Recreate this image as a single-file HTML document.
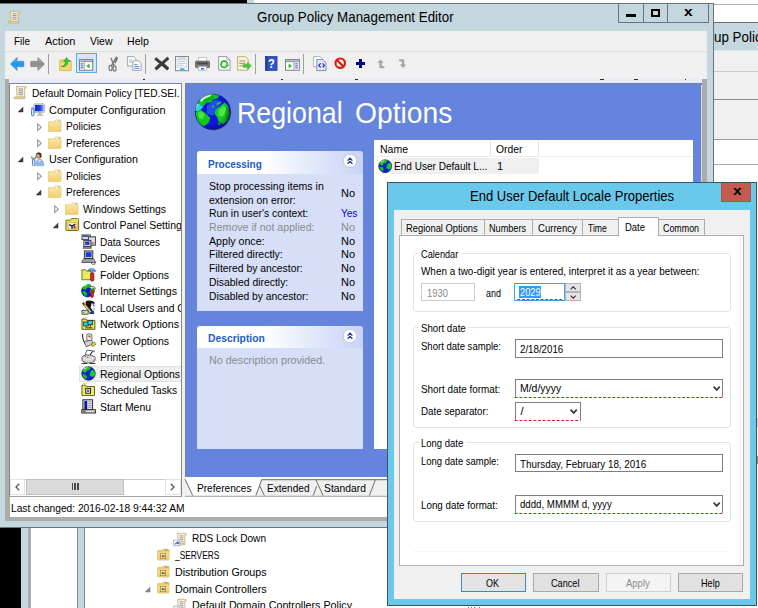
<!DOCTYPE html>
<html><head><meta charset="utf-8"><title>Group Policy Management Editor</title>
<style>
html,body{margin:0;padding:0;background:#fff;}
body{width:758px;height:608px;overflow:hidden;position:relative;font-family:"Liberation Sans",sans-serif;}
.r{position:absolute;box-sizing:border-box;}
.t{position:absolute;white-space:nowrap;font-family:"Liberation Sans",sans-serif;}
svg{overflow:visible;}
</style></head><body>
<svg class="r" style="left:0;top:0" width="0" height="0"><defs><linearGradient id="fg" x1="0" y1="0" x2="0" y2="1"><stop offset="0" stop-color="#fbe9a8"/><stop offset="1" stop-color="#f1ce70"/></linearGradient></defs></svg>
<div class="r" style="left:0.00px;top:0.00px;width:247.00px;height:3.20px;background:#000;"></div>
<div class="r" style="left:247.00px;top:0.00px;width:7.00px;height:3.20px;background:#c4d7de;"></div>
<div class="r" style="left:713.00px;top:0.00px;width:45.00px;height:608.00px;background:#fff;"></div>
<div class="r" style="left:713.00px;top:3.60px;width:45.00px;height:1.00px;background:#b5b5b5;"></div>
<div class="r" style="left:713.00px;top:22.00px;width:45.00px;height:1.00px;background:#6f6f6f;"></div>
<div class="r" style="left:713.00px;top:23.00px;width:45.00px;height:27.50px;background:#c4d7de;"></div>
<div class="r" style="left:713.00px;top:50.50px;width:45.00px;height:89.00px;background:#f0f0f0;"></div>
<div class="r" style="left:713.00px;top:50.30px;width:45.00px;height:1.00px;background:#dfe6ea;"></div>
<div class="r" style="left:713.00px;top:70.80px;width:45.00px;height:1.00px;background:#c9c9c9;"></div>
<div class="r" style="left:713.00px;top:98.60px;width:45.00px;height:1.60px;background:#8c8c8c;"></div>
<div class="r" style="left:713.00px;top:138.80px;width:45.00px;height:1.00px;background:#9a9a9a;"></div>
<div class="r" style="left:713.00px;top:163.80px;width:45.00px;height:1.00px;background:#a8a8a8;"></div>
<div class="t" style="left:713.60px;top:26.91px;height:20px;line-height:20px;font-size:15.4px;color:#000;transform:scaleX(0.8688);transform-origin:0 50%;">up Polic</div>
<div class="r" style="left:0.00px;top:528.00px;width:21.00px;height:80.00px;background:#000;"></div>
<div class="r" style="left:20.60px;top:528.00px;width:8.00px;height:80.00px;background:#c4d7de;"></div>
<div class="r" style="left:28.20px;top:528.00px;width:3.30px;height:80.00px;background:#ababab;"></div>
<div class="r" style="left:77.00px;top:528.00px;width:7.80px;height:80.00px;background:#c4d7de;border-left:1px solid #7f8a90;border-right:1px solid #7f8a90;"></div>
<div class="r" style="left:0.00px;top:3.00px;width:713.90px;height:525.20px;background:#c4d7de;border-top:1px solid #66747b;border-right:1px solid #66747b;border-bottom:1px solid #66747b;"></div>
<div class="t" style="left:257.30px;top:8.18px;height:18px;line-height:18px;font-size:14px;color:#000;transform:scaleX(0.9534);transform-origin:0 50%;">Group Policy Management Editor</div>
<div class="r" style="left:618.20px;top:3.00px;width:90.80px;height:19.80px;border:1px solid #66747b;"></div>
<div class="r" style="left:643.20px;top:4.00px;width:1.00px;height:18.00px;background:#66747b;"></div>
<div class="r" style="left:667.20px;top:4.00px;width:1.00px;height:18.00px;background:#66747b;"></div>
<div class="r" style="left:626.20px;top:14.20px;width:9.40px;height:2.60px;background:#000;"></div>
<div class="r" style="left:651.20px;top:9.40px;width:9.00px;height:7.20px;border:2px solid #000;border-top-width:2.4px;"></div>
<div class="t" style="left:683.60px;top:3.47px;height:18px;line-height:18px;font-size:13.5px;color:#000;font-weight:700;transform:scaleX(1.15);transform-origin:left center;">x</div>
<div class="r" style="left:5.00px;top:30.50px;width:702.00px;height:21.00px;background:#f0f0f0;"></div>
<div class="r" style="left:5.00px;top:51.20px;width:702.00px;height:1.00px;background:#dcdcdc;"></div>
<div class="r" style="left:5.00px;top:52.20px;width:702.00px;height:27.00px;background:#f0f0f0;"></div>
<div class="r" style="left:5.00px;top:79.20px;width:702.00px;height:442.00px;background:#ababab;"></div>
<div class="t" style="left:14.40px;top:33.73px;height:15px;line-height:15px;font-size:11.5px;color:#000;transform:scaleX(0.8634);transform-origin:0 50%;">File</div>
<div class="t" style="left:45.00px;top:33.73px;height:15px;line-height:15px;font-size:11.5px;color:#000;transform:scaleX(0.9511);transform-origin:0 50%;">Action</div>
<div class="t" style="left:90.00px;top:33.73px;height:15px;line-height:15px;font-size:11.5px;color:#000;transform:scaleX(0.9102);transform-origin:0 50%;">View</div>
<div class="t" style="left:127.00px;top:33.73px;height:15px;line-height:15px;font-size:11.5px;color:#000;transform:scaleX(0.9217);transform-origin:0 50%;">Help</div>
<div class="r" style="left:47.80px;top:54.00px;width:1.00px;height:19.50px;background:#a0a0a0;"></div>
<div class="r" style="left:145.00px;top:54.00px;width:1.00px;height:19.50px;background:#a0a0a0;"></div>
<div class="r" style="left:254.50px;top:54.00px;width:1.00px;height:19.50px;background:#a0a0a0;"></div>
<div class="r" style="left:303.20px;top:54.00px;width:1.00px;height:19.50px;background:#a0a0a0;"></div>
<div class="r" style="left:76.00px;top:53.30px;width:20.80px;height:20.20px;background:#cfe6fa;border:1px solid #5ea8e8;"></div>
<div class="r" style="left:9.00px;top:79.20px;width:693.00px;height:4.00px;background:#e6eafb;"></div>
<div class="r" style="left:143.40px;top:78.90px;width:2.00px;height:1.00px;background:#2a2a2a;"></div>
<div class="r" style="left:280.60px;top:78.90px;width:2.60px;height:1.00px;background:#2a2a2a;"></div>
<div class="r" style="left:354.60px;top:78.90px;width:3.20px;height:1.00px;background:#2a2a2a;"></div>
<div class="r" style="left:600.00px;top:78.90px;width:4.30px;height:1.00px;background:#2a2a2a;"></div>
<div class="r" style="left:633.80px;top:78.90px;width:4.60px;height:1.00px;background:#2a2a2a;"></div>
<div class="r" style="left:685.00px;top:78.90px;width:1.20px;height:1.00px;background:#2a2a2a;"></div>
<div class="r" style="left:143.60px;top:46.00px;width:1.60px;height:1.20px;background:#5a3a7a;"></div>
<div class="r" style="left:9.00px;top:83.00px;width:173.00px;height:414.00px;background:#fff;border:1px solid #828790;border-bottom:1.6px solid #a0a0a0;"></div>
<div class="r" style="left:182.00px;top:83.00px;width:3.20px;height:414.00px;background:#f0f0f0;"></div>
<div class="r" style="left:185.00px;top:83.00px;width:517.00px;height:394.00px;background:#6484de;border:1.6px solid #7b8087;border-bottom:none;border-right:none;"></div>
<div class="r" style="left:701.40px;top:84.60px;width:1.10px;height:392.40px;background:#dadada;"></div>
<div class="r" style="left:10.00px;top:497.00px;width:697.00px;height:19.80px;background:#fff;"></div>
<div class="t" style="left:10.60px;top:500.93px;height:15px;line-height:15px;font-size:11.5px;color:#000;transform:scaleX(0.8873);transform-origin:0 50%;">Last changed: 2016-02-18 9:44:32 AM</div>
<div class="r" style="left:0;top:0;width:181.3px;height:497px;overflow:hidden">
<div class="t" style="left:31.90px;top:86.42px;height:14px;line-height:14px;font-size:11px;color:#000;transform:scaleX(0.9215);transform-origin:0 50%;">Default Domain Policy [TED.SEI.</div>
<svg class="r" style="left:12.60px;top:85.00px;" width="15" height="15" viewBox="0 0 16 16"><path d="M3.5 1.5h9.5c1.2 0 1.6 1 1 2h-1.5v9.5H4.5z" fill="#f7edc4" stroke="#b9a774" stroke-width=".8"/><path d="M1.2 12.8h10.6c.9 0 1 .9.6 1.9H2.2c-1 0-1.5-1-1-1.9z" fill="#efe0a6" stroke="#b9a774" stroke-width=".8"/><path d="M12.4 1.6c1.4-.2 2.2.8 1.6 1.9h-1.6z" fill="#d9c78c"/><path d="M6 4.2h4.6M6 6.2h4.6M6 8.2h4.6M6 10.2h4.6" stroke="#8a86c4" stroke-width="1"/></svg>
<div class="t" style="left:48.90px;top:102.92px;height:14px;line-height:14px;font-size:11px;color:#000;transform:scaleX(0.9975);transform-origin:0 50%;">Computer Configuration</div>
<svg class="r" style="left:29.60px;top:101.50px;" width="15" height="15" viewBox="0 0 16 16"><rect x="4.2" y="1.9" width="11.4" height="9.2" rx=".8" fill="#dfe2e6" stroke="#a4a9b0" stroke-width=".8"/><defs><linearGradient id="sg" x1="0" y1="0" x2="1" y2="0"><stop offset="0" stop-color="#0a24d4"/><stop offset=".55" stop-color="#1c3ee0"/><stop offset="1" stop-color="#7a98f4"/></linearGradient></defs><rect x="5.4" y="3.1" width="9" height="6.8" fill="url(#sg)"/><path d="M9.2 11.1h2.6l.6 2.2h2v1.4H7.4v-1.4h1.4z" fill="#b6bac0"/><rect x="1.7" y="7.6" width="2.5" height="7.3" rx="1.2" fill="#eef4fc" stroke="#2f6fd0" stroke-width="1"/><path d="M1.2 7.8c0-1.4.6-2.2 1.800-2.200s1.800.8 1.800 2.200z" fill="#b4bcc6" stroke="#7a828c" stroke-width=".6"/></svg>
<svg class="r" style="left:18.40px;top:107.40px;" width="5.4" height="5.4" viewBox="0 0 5.4 5.4"><path d="M5 .2V5H.2z" fill="#404040" stroke="#262626" stroke-width=".5"/></svg>
<div class="t" style="left:65.90px;top:119.42px;height:14px;line-height:14px;font-size:11px;color:#000;transform:scaleX(0.9234);transform-origin:0 50%;">Policies</div>
<svg class="r" style="left:47.50px;top:118.00px;" width="15" height="15" viewBox="0 0 16 16"><path d="M.4 4h6.3l1.2-1.900h5.300q.7 0 .7.7V13.8q0 .6-.6.6H1q-.6 0-.6-.6z" fill="url(#fg)" stroke="#e2c46a" stroke-width=".7"/><rect x="8.7" y="2.7" width="4" height="1.5" fill="#fdf7e0"/><rect x="10.7" y="2.8" width="1.5" height="1.1" fill="#4a8ae0"/></svg>
<svg class="r" style="left:36.90px;top:122.90px;" width="5" height="8.4" viewBox="0 0 5 8.4"><path d="M.7 .9L4.3 4.2.7 7.5z" fill="#fff" stroke="#9c9c9c" stroke-width="1.15"/></svg>
<div class="t" style="left:65.90px;top:135.92px;height:14px;line-height:14px;font-size:11px;color:#000;transform:scaleX(0.9105);transform-origin:0 50%;">Preferences</div>
<svg class="r" style="left:47.50px;top:134.50px;" width="15" height="15" viewBox="0 0 16 16"><path d="M.4 4h6.3l1.2-1.900h5.300q.7 0 .7.7V13.8q0 .6-.6.6H1q-.6 0-.6-.6z" fill="url(#fg)" stroke="#e2c46a" stroke-width=".7"/><rect x="8.7" y="2.7" width="4" height="1.5" fill="#fdf7e0"/><rect x="10.7" y="2.8" width="1.5" height="1.1" fill="#4a8ae0"/></svg>
<svg class="r" style="left:36.90px;top:139.40px;" width="5" height="8.4" viewBox="0 0 5 8.4"><path d="M.7 .9L4.3 4.2.7 7.5z" fill="#fff" stroke="#9c9c9c" stroke-width="1.15"/></svg>
<div class="t" style="left:48.90px;top:152.42px;height:14px;line-height:14px;font-size:11px;color:#000;transform:scaleX(0.9704);transform-origin:0 50%;">User Configuration</div>
<svg class="r" style="left:29.60px;top:151.00px;" width="15" height="15" viewBox="0 0 16 16"><path d="M6.1 15.8c0-4.600 1.600-7.300 4.300-7.300s4.300 2.700 4.300 7.300z" fill="#8fb9ea" stroke="#6f9fd8" stroke-width=".5"/><path d="M8.200 9.500l2 2.500 2-2.500" fill="#dce9f8" opacity=".8"/><circle cx="9.300" cy="4.700" r="3.100" fill="#4a3c34"/><ellipse cx="8.500" cy="5.600" rx="2.100" ry="2.600" fill="#d8945c"/><path d="M6.400 3.600c1-2.200 4.600-2.600 5.800.2l-1 .6c-1.600-1.400-3.200-1.400-4.800-.8z" fill="#3a302a"/><path d="M1.700 5.600l1.200 1.800h2l1.200-1.800.5 1.800-1.500 2H2.800l-1.500-2z" fill="#9a9ea4" stroke="#70747a" stroke-width=".4"/><rect x="2.600" y="9.300" width="2.600" height="6.300" rx="1.200" fill="#eef4fc" stroke="#3a66b8" stroke-width="1"/></svg>
<svg class="r" style="left:18.40px;top:156.90px;" width="5.4" height="5.4" viewBox="0 0 5.4 5.4"><path d="M5 .2V5H.2z" fill="#404040" stroke="#262626" stroke-width=".5"/></svg>
<div class="t" style="left:65.90px;top:168.92px;height:14px;line-height:14px;font-size:11px;color:#000;transform:scaleX(0.9234);transform-origin:0 50%;">Policies</div>
<svg class="r" style="left:47.50px;top:167.50px;" width="15" height="15" viewBox="0 0 16 16"><path d="M.4 4h6.3l1.2-1.900h5.300q.7 0 .7.7V13.8q0 .6-.6.6H1q-.6 0-.6-.6z" fill="url(#fg)" stroke="#e2c46a" stroke-width=".7"/><rect x="8.7" y="2.7" width="4" height="1.5" fill="#fdf7e0"/><rect x="10.7" y="2.8" width="1.5" height="1.1" fill="#4a8ae0"/></svg>
<svg class="r" style="left:36.90px;top:172.40px;" width="5" height="8.4" viewBox="0 0 5 8.4"><path d="M.7 .9L4.3 4.2.7 7.5z" fill="#fff" stroke="#9c9c9c" stroke-width="1.15"/></svg>
<div class="t" style="left:65.90px;top:185.42px;height:14px;line-height:14px;font-size:11px;color:#000;transform:scaleX(0.9105);transform-origin:0 50%;">Preferences</div>
<svg class="r" style="left:47.50px;top:184.00px;" width="15" height="15" viewBox="0 0 16 16"><path d="M.4 4h6.3l1.2-1.900h5.300q.7 0 .7.7V13.8q0 .6-.6.6H1q-.6 0-.6-.6z" fill="url(#fg)" stroke="#e2c46a" stroke-width=".7"/><rect x="8.7" y="2.7" width="4" height="1.5" fill="#fdf7e0"/><rect x="10.7" y="2.8" width="1.5" height="1.1" fill="#4a8ae0"/></svg>
<svg class="r" style="left:36.30px;top:189.90px;" width="5.4" height="5.4" viewBox="0 0 5.4 5.4"><path d="M5 .2V5H.2z" fill="#404040" stroke="#262626" stroke-width=".5"/></svg>
<div class="t" style="left:82.90px;top:201.92px;height:14px;line-height:14px;font-size:11px;color:#000;transform:scaleX(0.9494);transform-origin:0 50%;">Windows Settings</div>
<svg class="r" style="left:64.50px;top:200.50px;" width="15" height="15" viewBox="0 0 16 16"><path d="M.4 4h6.3l1.2-1.900h5.300q.7 0 .7.7V13.8q0 .6-.6.6H1q-.6 0-.6-.6z" fill="url(#fg)" stroke="#e2c46a" stroke-width=".7"/><rect x="8.7" y="2.7" width="4" height="1.5" fill="#fdf7e0"/><rect x="10.7" y="2.8" width="1.5" height="1.1" fill="#4a8ae0"/></svg>
<svg class="r" style="left:53.90px;top:205.40px;" width="5" height="8.4" viewBox="0 0 5 8.4"><path d="M.7 .9L4.3 4.2.7 7.5z" fill="#fff" stroke="#9c9c9c" stroke-width="1.15"/></svg>
<div class="t" style="left:82.90px;top:218.42px;height:14px;line-height:14px;font-size:11px;color:#000;transform:scaleX(0.9502);transform-origin:0 50%;">Control Panel Settings</div>
<svg class="r" style="left:64.50px;top:217.00px;" width="15" height="15" viewBox="0 0 16 16"><path d="M1 3.4h4.8l1.2-1.7h6.6c.6 0 .9.3.9.9v11c0 .5-.3.8-.9.8H1.8c-.5 0-.8-.3-.8-.8z" fill="#f2e25c" stroke="#6f6a18" stroke-width="1"/><rect x="3.2" y="6.2" width="9.6" height="6.6" fill="#fbf7d6" stroke="#8a8430" stroke-width=".5"/><path d="M4.5 8.2l3 1.6 3.5-2.2" stroke="#222" stroke-width="1.6" fill="none"/><rect x="9.2" y="9.4" width="2.2" height="3" fill="#e02020"/><rect x="6.6" y="10" width="2" height="2.4" fill="#2040d0"/></svg>
<svg class="r" style="left:53.30px;top:222.90px;" width="5.4" height="5.4" viewBox="0 0 5.4 5.4"><path d="M5 .2V5H.2z" fill="#404040" stroke="#262626" stroke-width=".5"/></svg>
<div class="t" style="left:100.10px;top:234.92px;height:14px;line-height:14px;font-size:11px;color:#000;transform:scaleX(0.9003);transform-origin:0 50%;">Data Sources</div>
<svg class="r" style="left:81.00px;top:233.50px;" width="15" height="15" viewBox="0 0 16 16"><rect x="1" y="1" width="9" height="5" fill="#d8d8d8" stroke="#303030" stroke-width=".9"/><rect x="1.8" y="1.6" width="6" height="1.4" fill="#2030c0"/><rect x="8" y="3" width="7.4" height="9" fill="#c4c4c4" stroke="#303030" stroke-width=".9"/><path d="M8.6 5.2h6M8.6 7.4h6" stroke="#fff" stroke-width=".9"/><rect x="12" y="9" width="1.4" height="1.4" fill="#d02020"/><rect x="3" y="6.8" width="7.6" height="6.6" fill="#d0d0d0" stroke="#303030" stroke-width=".9"/><rect x="4.4" y="8" width="4.6" height="3.6" fill="#1838d0"/><rect x="2.4" y="13.6" width="8.6" height="1.6" fill="#8a8a8a" stroke="#303030" stroke-width=".6"/></svg>
<div class="t" style="left:100.10px;top:251.42px;height:14px;line-height:14px;font-size:11px;color:#000;transform:scaleX(0.9074);transform-origin:0 50%;">Devices</div>
<svg class="r" style="left:81.00px;top:250.00px;" width="15" height="15" viewBox="0 0 16 16"><rect x="3.6" y="1" width="9" height="8" fill="#c8c8c8" stroke="#303030" stroke-width="1"/><rect x="5" y="2.4" width="6.2" height="5" fill="#1838e0"/><path d="M2.6 9.6h11l2 3.6H.8z" fill="#e6e6e6" stroke="#303030" stroke-width=".9"/><path d="M3 11h10M2.4 12.2h11.4" stroke="#555" stroke-width=".6"/><path d="M10.5 13.4h4.5v1.8h-3.2z" fill="#f4f4f4" stroke="#444" stroke-width=".7"/></svg>
<div class="t" style="left:100.10px;top:267.92px;height:14px;line-height:14px;font-size:11px;color:#000;transform:scaleX(0.9564);transform-origin:0 50%;">Folder Options</div>
<svg class="r" style="left:81.00px;top:266.50px;" width="15" height="15" viewBox="0 0 16 16"><path d="M1 3h4l1 1.4h5.5v9.2H1z" fill="#ece64e" stroke="#77721c" stroke-width="1"/><path d="M2.4 6l7.6 6M9.6 6l-7 6" stroke="#f8f4b0" stroke-width=".8"/><rect x="10.3" y="6" width="3.4" height="9" rx="1.4" fill="#e02a1c" stroke="#6a0e08" stroke-width=".8"/><path d="M7.4 3.8c1-2.6 7-3 8.2.6l-1.4.8-1.2-1.4-1 2.2h-1.2l-.6-2.2z" fill="#6ab0e8" stroke="#1e4a8a" stroke-width=".7"/></svg>
<div class="t" style="left:100.10px;top:284.42px;height:14px;line-height:14px;font-size:11px;color:#000;transform:scaleX(0.9612);transform-origin:0 50%;">Internet Settings</div>
<svg class="r" style="left:81.00px;top:283.00px;" width="15" height="15" viewBox="0 0 16 16"><circle cx="7" cy="8.6" r="6.4" fill="#0a1ed8" stroke="#101050" stroke-width=".7"/><path d="M3.2 3c2-2 5.5-2.6 7.6-1.4L8.8 4.2 6.4 5 5 7.2 2.4 6.6 1.4 5.2z" fill="#14c814"/><path d="M10 6.4l2.8-2.6 1.8 2.4.4 3-2.4 2.8-1.6-1.2-1.8-.6z" fill="#18d018"/><path d="M1.6 8.4l3.2.6 1.6 2.2-.8 2.8-2-.8-1.6-2.4z" fill="#12c012"/><path d="M2.6 3.4c1.4-1.5 3.2-2.2 5-2.3l-3.6 3z" fill="#e8f4e8" opacity=".75"/><rect x="10.6" y="7" width="2.6" height="8.4" rx="1.1" fill="#e02a1c" stroke="#6a0e08" stroke-width=".7"/><path d="M7.6 5.4c1-2.4 6.6-2.8 8 .4l-1.4.8-1.2-1.2-.9 2h-1.2l-.6-2z" fill="#d8d8d8" stroke="#333" stroke-width=".7"/></svg>
<div class="t" style="left:100.10px;top:300.92px;height:14px;line-height:14px;font-size:11px;color:#000;transform:scaleX(0.9358);transform-origin:0 50%;">Local Users and Groups</div>
<svg class="r" style="left:81.00px;top:299.50px;" width="15" height="15" viewBox="0 0 16 16"><path d="M5 1.2c3-1.4 8-.6 9.6 1.6l-.6 2.2 1.2 2-1.2.8.4 2.4-2.2.8-.8 2.2-3.4-1.2L5.4 7.2z" fill="#111"/><path d="M11.2 3.6c1.6-.2 3 .8 3 2l1 1.8-1.2.6.2 2-2.2.6-1.8-2.4z" fill="#f4f4f4"/><rect x="12.6" y="4.8" width="1.2" height="1.4" fill="#1030e0"/><path d="M9.6 11.2l4 .2.6 3.6H8.8z" fill="#1030d8"/><path d="M1.4 3.8l1.6-1.4 8.4 10.2-1.8 1.2z" fill="#e8e04a" stroke="#333" stroke-width=".7"/><path d="M1.4 3.8l1.6-1.4 1.6 2-1.6 1.4z" fill="#d02020"/><rect x="1" y="11" width="6.6" height="4.2" fill="#d6d6d6" stroke="#333" stroke-width=".8"/><rect x="2.2" y="12.6" width="1.4" height="1.2" fill="#18b018"/></svg>
<div class="t" style="left:100.10px;top:317.42px;height:14px;line-height:14px;font-size:11px;color:#000;transform:scaleX(0.9716);transform-origin:0 50%;">Network Options</div>
<svg class="r" style="left:81.00px;top:316.00px;" width="15" height="15" viewBox="0 0 16 16"><path d="M1 3.2h4.2l1 1.4h8.6v9.6H1z" fill="#e8e24c" stroke="#55521a" stroke-width="1"/><path d="M2.2 2l1.4-1.2 1 1 1.2-1 1 1.2" stroke="#e8e24c" stroke-width="1" fill="none"/><rect x="2.8" y="6.4" width="5" height="4.2" fill="#22d8e8" stroke="#222" stroke-width=".8"/><rect x="7.4" y="4.8" width="5" height="4.2" fill="#22d8e8" stroke="#222" stroke-width=".8"/><path d="M5.4 11v1.6h6.4M10 9.4v2.8" stroke="#222" stroke-width=".9" fill="none"/></svg>
<div class="t" style="left:100.10px;top:333.92px;height:14px;line-height:14px;font-size:11px;color:#000;transform:scaleX(0.9564);transform-origin:0 50%;">Power Options</div>
<svg class="r" style="left:81.00px;top:332.50px;" width="15" height="15" viewBox="0 0 16 16"><path d="M1.6 1c0 5 .4 8 3.6 11" stroke="#222" stroke-width="1.1" fill="none"/><rect x="6.2" y="1" width="5.4" height="7.4" rx="1" fill="#ededed" stroke="#444" stroke-width=".8"/><rect x="8" y="2.6" width="2" height="2" fill="#e03018"/><path d="M3.4 9l7.8-1.4 2.2 3.6-7.8 3.6z" fill="#cfcfcf" stroke="#444" stroke-width=".8"/><path d="M11 11.2l3.6-1.4 1 2.6-3.6 2z" fill="#e6dc3a" stroke="#5e5a14" stroke-width=".7"/></svg>
<div class="t" style="left:100.10px;top:350.42px;height:14px;line-height:14px;font-size:11px;color:#000;transform:scaleX(0.9367);transform-origin:0 50%;">Printers</div>
<svg class="r" style="left:81.00px;top:349.00px;" width="15" height="15" viewBox="0 0 16 16"><path d="M6.4 1.2l6 .6-3 5.6-5.2-.6z" fill="#fff" stroke="#333" stroke-width=".8"/><path d="M9.8 6c.8-2.2 2.6-3.6 5-3.8" stroke="#222" stroke-width=".9" fill="none"/><path d="M1 8.4l4-2.2 6 .4 4 2v3.6l-4 2.6H4.6L1 12.2z" fill="#d4d4d4" stroke="#333" stroke-width=".8"/><path d="M1.2 8.6l3.6 2.2h6.4l3.6-2" stroke="#fff" stroke-width=".7" fill="none"/><rect x="4" y="7.4" width="1.4" height="1" fill="#18b018"/><rect x="6.4" y="8.4" width="1.4" height="1" fill="#e02020"/><path d="M.6 15.4h14.8" stroke="#222" stroke-width="1"/><rect x="6.6" y="14.6" width="2.4" height="1.4" fill="#e8dc30"/></svg>
<div class="r" style="left:79.30px;top:365.50px;width:110.00px;height:16.20px;background:#efefef;border:1px solid #e2e2e2;"></div>
<div class="t" style="left:100.10px;top:366.92px;height:14px;line-height:14px;font-size:11px;color:#000;transform:scaleX(0.9480);transform-origin:0 50%;">Regional Options</div>
<svg class="r" style="left:81.00px;top:365.50px;" width="15" height="15" viewBox="0 0 16 16"><circle cx="8" cy="8" r="7.2" fill="#0a1ed8" stroke="#101050" stroke-width=".7"/><path d="M3.2 3c2-2 5.5-2.6 7.6-1.4L8.8 4.2 6.4 5 5 7.2 2.4 6.6 1.4 5.2z" fill="#14c814"/><path d="M10 6.4l2.8-2.6 1.8 2.4.4 3-2.4 2.8-1.6-1.2-1.8-.6z" fill="#18d018"/><path d="M1.6 8.4l3.2.6 1.6 2.2-.8 2.8-2-.8-1.6-2.4z" fill="#12c012"/><path d="M2.6 3.4c1.4-1.5 3.2-2.2 5-2.3l-3.6 3z" fill="#e8f4e8" opacity=".75"/></svg>
<div class="t" style="left:100.10px;top:383.42px;height:14px;line-height:14px;font-size:11px;color:#000;transform:scaleX(0.9281);transform-origin:0 50%;">Scheduled Tasks</div>
<svg class="r" style="left:81.00px;top:382.00px;" width="15" height="15" viewBox="0 0 16 16"><path d="M1 3.4h4l1 1.4h8.4v9.6H1z" fill="#ebe54e" stroke="#5c5818" stroke-width="1"/><path d="M2 2.2l1.2-1.2 1 1 1.2-1 1 1.2" stroke="#ebe54e" stroke-width="1" fill="none"/><path d="M2 6l11.6 7.6M13.6 6L2 13.6M2 9.8h11.6M7.8 5.6v8.4" stroke="#f8f6c0" stroke-width=".7"/><rect x="5" y="6.8" width="5.2" height="5.2" fill="#e8e8e8" stroke="#222" stroke-width="1"/><rect x="6.4" y="8.2" width="2.4" height="2.4" fill="#6a5a9a"/></svg>
<div class="t" style="left:100.10px;top:399.92px;height:14px;line-height:14px;font-size:11px;color:#000;transform:scaleX(0.9479);transform-origin:0 50%;">Start Menu</div>
<svg class="r" style="left:81.00px;top:398.50px;" width="15" height="15" viewBox="0 0 16 16"><rect x="2" y=".8" width="10.4" height="10.6" fill="#e4e4e4" stroke="#222" stroke-width="1"/><rect x="3.6" y="2" width="3" height="8.8" fill="#0a10a8"/><path d="M7.8 3h3.4M7.8 5h3.4M7.8 7h3.4M7.8 9h3.4" stroke="#8c8cb4" stroke-width=".9"/><rect x=".8" y="11.4" width="14.6" height="3.6" fill="#b4b4b4" stroke="#222" stroke-width=".9"/><rect x="2" y="12.4" width="1.4" height="1.4" fill="#e02020"/><rect x="3.4" y="12.4" width="1.4" height="1.4" fill="#18b018"/><rect x="6" y="12.4" width="8" height="1.6" fill="#d8d8d8"/></svg>
</div>
<div class="r" style="left:10.00px;top:479.40px;width:171.40px;height:15.20px;background:#fff;border-top:1px solid #cdcdcd;"></div>
<div class="r" style="left:10.00px;top:479.40px;width:15.40px;height:15.20px;background:#fff;border:1px solid #e4e4e4;"></div>
<div class="r" style="left:165.00px;top:479.40px;width:15.80px;height:15.20px;background:#fff;border:1px solid #e4e4e4;"></div>
<div class="r" style="left:26.40px;top:479.40px;width:97.20px;height:15.20px;background:#dadada;border:1px solid #bdbdbd;"></div>
<svg class="r" style="left:14.60px;top:483.20px;" width="5" height="8" viewBox="0 0 5 8"><path d="M4.2 .8L1 4l3.2 3.2" fill="none" stroke="#555" stroke-width="1.3"/></svg>
<svg class="r" style="left:170.40px;top:483.20px;" width="5" height="8" viewBox="0 0 5 8"><path d="M.8 .8L4 4 .8 7.2" fill="none" stroke="#555" stroke-width="1.3"/></svg>
<div class="r" style="left:71.60px;top:483.40px;width:1.50px;height:7.00px;background:#4a4a4a;"></div>
<div class="r" style="left:74.30px;top:483.40px;width:1.50px;height:7.00px;background:#4a4a4a;"></div>
<div class="r" style="left:77.00px;top:483.40px;width:1.50px;height:7.00px;background:#4a4a4a;"></div>
<svg class="r" style="left:9.80px;top:57.00px;" width="14.4" height="14" viewBox="0 0 14.4 14"><defs><linearGradient id="gb" x1="0" y1="0" x2="0" y2="1"><stop offset="0" stop-color="#5cc0f8"/><stop offset=".5" stop-color="#1e90e8"/><stop offset="1" stop-color="#49b0f4"/></linearGradient></defs><path d="M7 .6L.6 7 7 13.4V9.6h6.8V4.4H7z" fill="url(#gb)" stroke="#2a8ae0" stroke-width=".8" stroke-linejoin="round"/></svg>
<svg class="r" style="left:30.00px;top:57.00px;" width="15" height="14" viewBox="0 0 15 14"><defs><linearGradient id="gg" x1="0" y1="0" x2="0" y2="1"><stop offset="0" stop-color="#b8b8b8"/><stop offset=".5" stop-color="#8a8a8a"/><stop offset="1" stop-color="#b0b0b0"/></linearGradient></defs><path d="M8 .6L14.4 7 8 13.4V9.6H.8V4.4H8z" fill="url(#gg)" stroke="#7c7c7c" stroke-width=".8" stroke-linejoin="round"/></svg>
<svg class="r" style="left:58.80px;top:56.60px;" width="13" height="14.4" viewBox="0 0 13 14.4"><path d="M.6 3.800h11.600v9.800H.6z" fill="#f2d678" stroke="#d2b250" stroke-width=".8"/><path d="M.6 3.800l1.200-1.500h3.600l1.200 1.500z" fill="#e8c860"/><path d="M2.2 9.6c3.2-.6 4.2-2.6 4.2-5.2H4.6L7.6.6l3 3.8H8.8c0 3.4-2 5.6-6.6 5.2z" fill="#3cc832" stroke="#1e9a1e" stroke-width=".6"/><rect x="9.6" y="3.2" width="2.4" height="1" fill="#6aa0e0"/></svg>
<svg class="r" style="left:79.40px;top:58.60px;" width="14.2" height="11.8" viewBox="0 0 14.2 11.8"><rect x=".5" y=".5" width="13.2" height="10.8" fill="#fff" stroke="#7a7f88" stroke-width="1"/><rect x=".5" y=".5" width="13.2" height="2.2" fill="#b9bec8" stroke="#7a7f88" stroke-width=".8"/><rect x="1" y="2.8" width="4" height="8" fill="#e6e9f0"/><path d="M5.2 2.8v8.4" stroke="#8a8f98" stroke-width=".8"/><path d="M1.8 4.8h2.2M1.8 6.8h2.2M1.8 8.8h2.2" stroke="#3c64c8" stroke-width="1"/><path d="M10.6 4.4v5L7.2 6.9z" fill="#36b436"/></svg>
<svg class="r" style="left:108.40px;top:55.80px;" width="11" height="15.4" viewBox="0 0 11 15.4"><path d="M8.6.6L3.6 9.6M2.8 2l3.6 7.8" stroke="#777" stroke-width="1.4" fill="none"/><path d="M9.6 1.4L7 7" stroke="#555" stroke-width="1.2"/><ellipse cx="2.6" cy="12" rx="1.6" ry="2.6" fill="none" stroke="#777" stroke-width="1.2"/><ellipse cx="6.6" cy="12.4" rx="1.5" ry="2.5" fill="none" stroke="#777" stroke-width="1.2"/></svg>
<svg class="r" style="left:126.60px;top:56.20px;" width="15" height="15" viewBox="0 0 15 15"><path d="M.6.6h6l2.4 2.4v7H.6z" fill="#fff" stroke="#8a8f9a" stroke-width=".8"/><path d="M2 4h3M2 6h4" stroke="#8fb0e0" stroke-width=".9"/><path d="M5.8 4.8h6l2.4 2.4v7.2H5.8z" fill="#fff" stroke="#8a8f9a" stroke-width=".8"/><path d="M7.4 8.4h3M7.4 10.4h5M7.4 12.4h5" stroke="#4f86d8" stroke-width="1"/></svg>
<svg class="r" style="left:153.60px;top:56.20px;" width="15.6" height="14.8" viewBox="0 0 15.6 14.8"><path d="M2 1.4L7.8 6 13.4 1l1.6 2-5 4.4 5 4.6-1.8 2.2-5.4-4.8-5.4 4.8L.8 12l4.8-4.6L.6 3.4z" fill="#3a3a3a" stroke="#2a2a2a" stroke-width=".5"/></svg>
<svg class="r" style="left:174.80px;top:56.00px;" width="14" height="15.2" viewBox="0 0 14 15.2"><rect x=".5" y=".5" width="13" height="14.2" fill="#f4f6fa" stroke="#858a94" stroke-width="1"/><rect x="2.2" y="3.6" width="9.6" height="7.4" fill="#fff" stroke="#b8c4d8" stroke-width=".7"/><path d="M3 2h8M3.4 5.4h7M3.4 7.4h7M3.4 9.2h5" stroke="#a9b6cc" stroke-width=".8"/><rect x="5" y="12.4" width="4.4" height="1.6" fill="#28b4f0"/></svg>
<svg class="r" style="left:195.20px;top:56.80px;" width="15" height="14.2" viewBox="0 0 15 14.2"><rect x="3.6" y=".5" width="7.8" height="4.4" fill="#fff" stroke="#b0b0b0" stroke-width=".7"/><rect x=".5" y="4.2" width="14" height="6.4" rx=".8" fill="#7c7c7c" stroke="#5a5a5a" stroke-width=".8"/><rect x="2" y="5.4" width="11" height="2" fill="#4a4a4a"/><rect x="3.4" y="9.6" width="8.2" height="4" fill="#fff" stroke="#a8b4c8" stroke-width=".7"/><rect x="6" y="11" width="3" height="1.6" fill="#2a7ae0"/></svg>
<svg class="r" style="left:217.80px;top:56.20px;" width="12.6" height="14.8" viewBox="0 0 12.6 14.8"><path d="M.6.6h8.2l3.2 3.2v10.4H.6z" fill="#fff" stroke="#8a8f9a" stroke-width=".9"/><path d="M8.8.6v3.2H12" fill="none" stroke="#8a8f9a" stroke-width=".7"/><path d="M9.4 8.2a3.2 3.2 0 1 0-1 2.4" fill="none" stroke="#36b832" stroke-width="1.9"/><path d="M6.8 8.6h4.4l-2 3z" fill="#36b832"/></svg>
<svg class="r" style="left:236.80px;top:56.20px;" width="14.6" height="14.8" viewBox="0 0 14.6 14.8"><path d="M.6.6h7.6l3 3v10.6H.6z" fill="#fbf3cf" stroke="#b8aa78" stroke-width=".9"/><path d="M2.2 5h6.4M2.2 7.4h6.4M2.2 9.8h6.4" stroke="#9a9684" stroke-width="1"/><path d="M6.4 8.4h4.2V6.4l3.8 3.4-3.8 3.4v-2H6.4z" fill="#4cc83c" stroke="#2a9a24" stroke-width=".5"/></svg>
<svg class="r" style="left:264.80px;top:55.80px;" width="12.4" height="15" viewBox="0 0 12.4 15"><rect x=".3" y=".3" width="11.8" height="14.4" fill="#2f55c4" stroke="#1c347e" stroke-width=".6"/><rect x=".6" y=".6" width="2.4" height="13.8" fill="#2440a0"/></svg>
<div class="t" style="left:268.00px;top:54.67px;height:18px;line-height:18px;font-size:13.5px;color:#fff;font-weight:700;transform:scaleX(0.82);transform-origin:0 50%;">?</div>
<svg class="r" style="left:284.60px;top:59.00px;" width="14.8" height="11.8" viewBox="0 0 14.8 11.8"><rect x=".5" y=".5" width="13.8" height="10.8" fill="#fff" stroke="#7a7f88" stroke-width="1"/><rect x=".5" y=".5" width="13.8" height="2.2" fill="#b9bec8" stroke="#7a7f88" stroke-width=".8"/><rect x="9" y="2.8" width="5" height="8" fill="#e6e9f0"/><path d="M9 2.8v8.4" stroke="#8a8f98" stroke-width=".8"/><path d="M10.4 4.8h2.4M10.4 6.8h2.4M10.4 8.8h2.4" stroke="#3c64c8" stroke-width="1"/><path d="M3.6 4.4v5L7 6.9z" fill="#36b436"/></svg>
<svg class="r" style="left:313.00px;top:55.80px;" width="13.8" height="15.2" viewBox="0 0 13.8 15.2"><path d="M.6.6h6.6l2.2 2.2v8H.6z" fill="#fff" stroke="#9aa0ac" stroke-width=".8"/><path d="M3.8 3.6h6l3.2 3.2v7.8H3.8z" fill="#dfe8fb" stroke="#7c86a0" stroke-width=".9"/><path d="M7.6 7.4L5.8 9.4l1.8 2M9.6 7.4l1.8 2-1.8 2" fill="none" stroke="#1c2ea8" stroke-width="1.2"/></svg>
<svg class="r" style="left:333.60px;top:56.80px;" width="13.2" height="13" viewBox="0 0 13.2 13"><circle cx="6.8" cy="7" r="5.4" fill="#a0a0a0" opacity=".5"/><circle cx="6.2" cy="6.2" r="4.7" fill="#fff" stroke="#e01a10" stroke-width="2.2"/><path d="M2.8 3l6.8 6.6" stroke="#e01a10" stroke-width="2.2"/></svg>
<div class="r" style="left:359.20px;top:59.00px;width:3.20px;height:8.60px;background:#05058c;"></div>
<div class="r" style="left:356.20px;top:61.60px;width:9.20px;height:3.20px;background:#05058c;"></div>
<svg class="r" style="left:376.60px;top:58.80px;" width="8.6" height="9.4" viewBox="0 0 8.6 9.4"><path d="M3.4.4L.4 3.8h2v5.4h5V7H4.8V3.8h2z" fill="#a6a6a6"/></svg>
<svg class="r" style="left:397.80px;top:58.80px;" width="8.6" height="9.4" viewBox="0 0 8.6 9.4"><path d="M5.2 9L8.2 5.6h-2V.2h-5v2.2h2.6v3.2h-2z" fill="#a6a6a6"/></svg>
<svg class="r" style="left:7.00px;top:10.40px;" width="14.4" height="14.4" viewBox="0 0 16 16"><path d="M3.5 1.5h9.5c1.2 0 1.6 1 1 2h-1.5v9.5H4.5z" fill="#f7edc4" stroke="#b9a774" stroke-width=".8"/><path d="M1.2 12.8h10.6c.9 0 1 .9.6 1.9H2.2c-1 0-1.5-1-1-1.9z" fill="#efe0a6" stroke="#b9a774" stroke-width=".8"/><path d="M12.4 1.6c1.4-.2 2.2.8 1.6 1.9h-1.6z" fill="#d9c78c"/><path d="M6 4.2h4.6M6 6.2h4.6M6 8.2h4.6M6 10.2h4.6" stroke="#8a86c4" stroke-width="1"/></svg>
<svg class="r" style="left:193.90px;top:92.70px;" width="37.6" height="37.6" viewBox="0 0 37.6 37.6"><defs><clipPath id="gc"><circle cx="18" cy="18" r="18"/></clipPath><radialGradient id="gsh" cx=".38" cy=".35" r=".7"><stop offset=".7" stop-color="#000" stop-opacity="0"/><stop offset="1" stop-color="#000" stop-opacity=".35"/></radialGradient></defs><g transform="translate(1,1) scale(0.9889)"><circle cx="18.600" cy="18.800" r="18" fill="#18205a" opacity=".45"/><circle cx="18" cy="18" r="18" fill="#0c16e0"/><g clip-path="url(#gc)"><path d="M12 12l8-6 6 1-3 9-5 6-6-2z" fill="#2c56ea" opacity=".85"/><path d="M2 9l2-5 5-3.500 6-1.500 6 .5 4 1.500-2.500 3.500-4 1-2 3h-4.500l-4 4.500-3.500-3.500z" fill="#10c418"/><path d="M5 4.500l5-3.500 8-1.500-3 3-5 2-4 4z" fill="#e8f6e8" opacity=".9"/><path d="M9 6l5-2 4-2 2 1-3 3-4 .5-3 3z" fill="#0aa012" opacity=".6"/><path d="M0 10l4.500-.5 4 4-5.500 4.500-3.500-1z" fill="#2cd4e4"/><path d="M0 9l3.500.5-3 6z" fill="#eef8f8" opacity=".9"/><path d="M20.500 17l4-4 5.500-4.500 3.500 4 1.500 7.500-2.500 7-4.500 3.500-4-2.500-1.500-4.500-2.500-3z" fill="#14cc1c"/><path d="M24 16l5-4 3 3-4 8-4-1z" fill="#58ec58" opacity=".8"/><path d="M31 12l3.500 4 .5 6-2 6-2-1 1-8z" fill="#0a8c10" opacity=".6"/><path d="M21.500 9.500l4.500-2 .8 1.600-4.500 2.200z" fill="#18d020"/><circle cx="18.200" cy="12.800" r="1.200" fill="#18d020"/><path d="M.5 19l4.500-3.500 5 3.500 5.500 5-1.500 4.500-4.500 4-4-1-3.500-5z" fill="#12c81a"/><path d="M3 19l3-1.500 4 3-2 5-4-1z" fill="#54ec54" opacity=".8"/><circle cx="24.500" cy="30" r="1.300" fill="#14c41c"/><circle cx="18" cy="18" r="18" fill="url(#gsh)"/></g><circle cx="18" cy="18" r="17.800" fill="none" stroke="#0a0a40" stroke-width=".7" opacity=".55"/></g></svg>
<div class="t" style="left:236.90px;top:92.77px;height:40px;line-height:40px;font-size:28.6px;color:#fff;transform:scaleX(0.9354);transform-origin:0 50%;">Regional</div>
<div class="t" style="left:355.20px;top:92.77px;height:40px;line-height:40px;font-size:28.6px;color:#fff;transform:scaleX(0.9882);transform-origin:0 50%;">Options</div>
<div class="r" style="left:197.20px;top:151.20px;width:165.60px;height:22.50px;background:linear-gradient(to right,#ffffff 0%,#ffffff 40%,#c7d3f7 100%);border-radius:3px 3px 0 0;"></div>
<div class="r" style="left:197.20px;top:173.70px;width:165.60px;height:137.50px;background:#d6dff7;"></div>
<div class="t" style="left:208.40px;top:156.82px;height:14px;line-height:14px;font-size:11px;color:#215dc6;font-weight:700;transform:scaleX(0.9072);transform-origin:0 50%;">Processing</div>
<svg class="r" style="left:342.60px;top:154.20px;" width="14" height="14" viewBox="0 0 14 14"><circle cx="7" cy="7" r="6.7" fill="#fff" stroke="#b4bfd8" stroke-width=".8"/><path d="M4.6 6.6L7 4.2l2.4 2.4M4.6 9.8L7 7.4l2.4 2.4" fill="none" stroke="#1c3c9c" stroke-width="1.3"/></svg>
<div class="r" style="left:197.20px;top:325.70px;width:165.60px;height:22.50px;background:linear-gradient(to right,#ffffff 0%,#ffffff 40%,#c7d3f7 100%);border-radius:3px 3px 0 0;"></div>
<div class="r" style="left:197.20px;top:348.20px;width:165.60px;height:101.10px;background:#d6dff7;"></div>
<div class="t" style="left:208.40px;top:331.32px;height:14px;line-height:14px;font-size:11px;color:#215dc6;font-weight:700;transform:scaleX(0.9387);transform-origin:0 50%;">Description</div>
<svg class="r" style="left:342.60px;top:328.70px;" width="14" height="14" viewBox="0 0 14 14"><circle cx="7" cy="7" r="6.7" fill="#fff" stroke="#b4bfd8" stroke-width=".8"/><path d="M4.6 6.6L7 4.2l2.4 2.4M4.6 9.8L7 7.4l2.4 2.4" fill="none" stroke="#1c3c9c" stroke-width="1.3"/></svg>
<div class="t" style="left:209.20px;top:179.12px;height:14px;line-height:14px;font-size:11px;color:#000;transform:scaleX(0.9575);transform-origin:0 50%;">Stop processing items in</div>
<div class="t" style="left:209.20px;top:192.52px;height:14px;line-height:14px;font-size:11px;color:#000;transform:scaleX(0.9458);transform-origin:0 50%;">extension on error:</div>
<div class="t" style="left:209.20px;top:206.12px;height:14px;line-height:14px;font-size:11px;color:#000;transform:scaleX(0.9414);transform-origin:0 50%;">Run in user's context:</div>
<div class="t" style="left:341.00px;top:206.12px;height:14px;line-height:14px;font-size:11px;color:#0000ff;transform:scaleX(0.9139);transform-origin:0 50%;">Yes</div>
<div class="t" style="left:209.20px;top:219.82px;height:14px;line-height:14px;font-size:11px;color:#8c8c8c;transform:scaleX(0.9639);transform-origin:0 50%;">Remove if not applied:</div>
<div class="t" style="left:341.00px;top:219.82px;height:14px;line-height:14px;font-size:11px;color:#8c8c8c;letter-spacing:0.169px;">No</div>
<div class="t" style="left:209.20px;top:233.52px;height:14px;line-height:14px;font-size:11px;color:#000;transform:scaleX(0.9655);transform-origin:0 50%;">Apply once:</div>
<div class="t" style="left:341.00px;top:233.52px;height:14px;line-height:14px;font-size:11px;color:#000;letter-spacing:0.169px;">No</div>
<div class="t" style="left:209.20px;top:247.22px;height:14px;line-height:14px;font-size:11px;color:#000;transform:scaleX(0.9499);transform-origin:0 50%;">Filtered directly:</div>
<div class="t" style="left:341.00px;top:247.22px;height:14px;line-height:14px;font-size:11px;color:#000;letter-spacing:0.169px;">No</div>
<div class="t" style="left:209.20px;top:260.92px;height:14px;line-height:14px;font-size:11px;color:#000;transform:scaleX(0.9407);transform-origin:0 50%;">Filtered by ancestor:</div>
<div class="t" style="left:341.00px;top:260.92px;height:14px;line-height:14px;font-size:11px;color:#000;letter-spacing:0.169px;">No</div>
<div class="t" style="left:209.20px;top:274.72px;height:14px;line-height:14px;font-size:11px;color:#000;transform:scaleX(0.9462);transform-origin:0 50%;">Disabled directly:</div>
<div class="t" style="left:341.00px;top:274.72px;height:14px;line-height:14px;font-size:11px;color:#000;letter-spacing:0.169px;">No</div>
<div class="t" style="left:209.20px;top:288.52px;height:14px;line-height:14px;font-size:11px;color:#000;transform:scaleX(0.9383);transform-origin:0 50%;">Disabled by ancestor:</div>
<div class="t" style="left:341.00px;top:288.52px;height:14px;line-height:14px;font-size:11px;color:#000;letter-spacing:0.169px;">No</div>
<div class="t" style="left:341.00px;top:186.42px;height:14px;line-height:14px;font-size:11px;color:#000;letter-spacing:0.169px;">No</div>
<div class="t" style="left:209.20px;top:353.42px;height:14px;line-height:14px;font-size:11px;color:#8c8c8c;transform:scaleX(0.9800);transform-origin:0 50%;">No description provided.</div>
<div class="r" style="left:374.00px;top:140.00px;width:319.00px;height:309.30px;background:#fff;"></div>
<div class="r" style="left:374.00px;top:155.60px;width:319.00px;height:1.00px;background:#ededed;"></div>
<div class="r" style="left:489.60px;top:140.00px;width:1.00px;height:15.60px;background:#e5e5e5;"></div>
<div class="r" style="left:538.40px;top:140.00px;width:1.00px;height:15.60px;background:#e5e5e5;"></div>
<div class="t" style="left:380.00px;top:142.02px;height:14px;line-height:14px;font-size:11px;color:#000;transform:scaleX(0.9542);transform-origin:0 50%;">Name</div>
<div class="t" style="left:496.20px;top:142.02px;height:14px;line-height:14px;font-size:11px;color:#000;transform:scaleX(0.9389);transform-origin:0 50%;">Order</div>
<div class="r" style="left:392.00px;top:158.00px;width:147.00px;height:15.80px;background:#efefef;"></div>
<svg class="r" style="left:378.00px;top:158.60px;" width="14.4" height="14.4" viewBox="0 0 16 16"><circle cx="8" cy="8" r="7.2" fill="#0a1ed8" stroke="#101050" stroke-width=".7"/><path d="M3.2 3c2-2 5.5-2.6 7.6-1.4L8.8 4.2 6.4 5 5 7.2 2.4 6.6 1.4 5.2z" fill="#14c814"/><path d="M10 6.4l2.8-2.6 1.8 2.4.4 3-2.4 2.8-1.6-1.2-1.8-.6z" fill="#18d018"/><path d="M1.6 8.4l3.2.6 1.6 2.2-.8 2.8-2-.8-1.6-2.4z" fill="#12c012"/><path d="M2.6 3.4c1.4-1.5 3.2-2.2 5-2.3l-3.6 3z" fill="#e8f4e8" opacity=".75"/></svg>
<div class="t" style="left:394.20px;top:159.12px;height:14px;line-height:14px;font-size:11px;color:#000;transform:scaleX(0.9133);transform-origin:0 50%;">End User Default L...</div>
<div class="t" style="left:497.00px;top:159.12px;height:14px;line-height:14px;font-size:11px;color:#000;">1</div>
<svg class="r" style="left:185.00px;top:477.00px;" width="517" height="20" viewBox="0 0 517 20"><rect x="0" y="0" width="517" height="20" fill="#f0f0f0"/><rect x="0" y="0" width="517" height="2.3" fill="#f6f6f6"/><path d="M0 0h77.6L76.8 2.4 71 18.7H7.8L0 2.2z" fill="#fff"/><path d="M76.8 2.7H517" stroke="#5a5a5a" stroke-width=".9"/><path d="M0 2.2L7.8 18.7M70.8 18.7L76.8 2.4" fill="none" stroke="#4a4a4a" stroke-width=".8"/><path d="M74.8 8.8L79.4 18.7M128.2 18.7L131.6 9.2M130.9 2.7L138.1 18.7M184.4 18.7L190.4 2.7" fill="none" stroke="#4a4a4a" stroke-width=".8"/><rect x="0" y="18.7" width="517" height="1.3" fill="#b2b2b2"/></svg>
<div class="t" style="left:196.50px;top:481.42px;height:14px;line-height:14px;font-size:11px;color:#000;transform:scaleX(0.9189);transform-origin:0 50%;">Preferences</div>
<div class="t" style="left:267.30px;top:481.42px;height:14px;line-height:14px;font-size:11px;color:#000;transform:scaleX(0.9143);transform-origin:0 50%;">Extended</div>
<div class="t" style="left:324.00px;top:481.42px;height:14px;line-height:14px;font-size:11px;color:#000;transform:scaleX(0.9407);transform-origin:0 50%;">Standard</div>
<svg class="r" style="left:172.80px;top:531.60px;" width="14.6" height="14.6" viewBox="0 0 16 16"><path d="M5 1.4h8.4c1.2 0 1.6 1 1 2h-1.4v9H5.8z" fill="#f6efd0" stroke="#b9ab7c" stroke-width=".8"/><path d="M13 1.5c1.2-.1 1.8.8 1.3 1.8H13z" fill="#d9c78c"/><path d="M3.4 12.4h9c.8 0 .9.8.5 1.7H4.2c-.9 0-1.2-.9-.8-1.7z" fill="#efe2ac" stroke="#b9ab7c" stroke-width=".8"/><path d="M7.4 4.2h4M7.4 6.2h4M7.4 8.2h4M8.4 10.2h3" stroke="#8f93b4" stroke-width=".9"/><rect x=".8" y="8.8" width="6.4" height="6.4" fill="#f4f6fc" stroke="#8c96bc" stroke-width=".7"/><path d="M2 14.2c.2-2 1.4-3 3-3v-1.2l1.8 2-1.8 1.8v-1.1c-1.2 0-2.1.5-3 1.500z" fill="#1c2ec0"/></svg>
<div class="t" style="left:192.00px;top:531.12px;height:14px;line-height:14px;font-size:11px;color:#000;transform:scaleX(0.9170);transform-origin:0 50%;">RDS Lock Down</div>
<svg class="r" style="left:156.80px;top:548.20px;" width="13.4" height="13.4" viewBox="0 0 16 16"><path d="M1 3.2h5l1.2-1.6h6.3c.5 0 .8.3.8.8v11.2c0 .4-.3.7-.8.7H1.6c-.4 0-.7-.3-.7-.7z" fill="#efcf6a" stroke="#c9a648" stroke-width=".8"/><path d="M1.4 5h12.8v8.8H1.4z" fill="#f5da84"/><path d="M1.4 10.4h12.8v3.4H1.4z" fill="#edc85e" opacity=".8"/><rect x="9.8" y="2" width="2.4" height="1.2" fill="#5b8fd6"/><rect x="4.4" y="6.6" width="6" height="6.2" fill="#f7edbc" stroke="#8f7a2e" stroke-width=".8"/><rect x="5.6" y="8.6" width="3.6" height="2.4" fill="#7d6a24"/></svg>
<div class="t" style="left:175.40px;top:548.42px;height:14px;line-height:14px;font-size:11px;color:#000;transform:scaleX(0.7573);transform-origin:0 50%;">_SERVERS</div>
<svg class="r" style="left:156.80px;top:564.80px;" width="13.4" height="13.4" viewBox="0 0 16 16"><path d="M1 3.2h5l1.2-1.6h6.3c.5 0 .8.3.8.8v11.2c0 .4-.3.7-.8.7H1.6c-.4 0-.7-.3-.7-.7z" fill="#efcf6a" stroke="#c9a648" stroke-width=".8"/><path d="M1.4 5h12.8v8.8H1.4z" fill="#f5da84"/><path d="M1.4 10.4h12.8v3.4H1.4z" fill="#edc85e" opacity=".8"/><rect x="9.8" y="2" width="2.4" height="1.2" fill="#5b8fd6"/><rect x="4.4" y="6.6" width="6" height="6.2" fill="#f7edbc" stroke="#8f7a2e" stroke-width=".8"/><rect x="5.6" y="8.6" width="3.6" height="2.4" fill="#7d6a24"/></svg>
<div class="t" style="left:175.40px;top:565.02px;height:14px;line-height:14px;font-size:11px;color:#000;transform:scaleX(0.9729);transform-origin:0 50%;">Distribution Groups</div>
<svg class="r" style="left:156.80px;top:581.40px;" width="13.4" height="13.4" viewBox="0 0 16 16"><path d="M1 3.2h5l1.2-1.6h6.3c.5 0 .8.3.8.8v11.2c0 .4-.3.7-.8.7H1.6c-.4 0-.7-.3-.7-.7z" fill="#efcf6a" stroke="#c9a648" stroke-width=".8"/><path d="M1.4 5h12.8v8.8H1.4z" fill="#f5da84"/><path d="M1.4 10.4h12.8v3.4H1.4z" fill="#edc85e" opacity=".8"/><rect x="9.8" y="2" width="2.4" height="1.2" fill="#5b8fd6"/><rect x="4.4" y="6.6" width="6" height="6.2" fill="#f7edbc" stroke="#8f7a2e" stroke-width=".8"/><rect x="5.6" y="8.6" width="3.6" height="2.4" fill="#7d6a24"/></svg>
<div class="t" style="left:175.40px;top:581.62px;height:14px;line-height:14px;font-size:11px;color:#000;transform:scaleX(0.9729);transform-origin:0 50%;">Domain Controllers</div>
<svg class="r" style="left:145.20px;top:587.20px;" width="5.4" height="5.4" viewBox="0 0 5.4 5.4"><path d="M5 .2V5H.2z" fill="#8c8c8c" stroke="#6e6e6e" stroke-width=".5"/></svg>
<svg class="r" style="left:172.80px;top:598.20px;" width="14.6" height="14.6" viewBox="0 0 16 16"><path d="M5 1.4h8.4c1.2 0 1.6 1 1 2h-1.4v9H5.8z" fill="#f6efd0" stroke="#b9ab7c" stroke-width=".8"/><path d="M13 1.5c1.2-.1 1.8.8 1.3 1.8H13z" fill="#d9c78c"/><path d="M3.4 12.4h9c.8 0 .9.8.5 1.7H4.2c-.9 0-1.2-.9-.8-1.7z" fill="#efe2ac" stroke="#b9ab7c" stroke-width=".8"/><path d="M7.4 4.2h4M7.4 6.2h4M7.4 8.2h4M8.4 10.2h3" stroke="#8f93b4" stroke-width=".9"/><rect x=".8" y="8.8" width="6.4" height="6.4" fill="#f4f6fc" stroke="#8c96bc" stroke-width=".7"/><path d="M2 14.2c.2-2 1.4-3 3-3v-1.2l1.8 2-1.8 1.8v-1.1c-1.2 0-2.1.5-3 1.500z" fill="#1c2ec0"/></svg>
<div class="t" style="left:192.00px;top:597.82px;height:14px;line-height:14px;font-size:11px;color:#000;transform:scaleX(0.9729);transform-origin:0 50%;">Default Domain Controllers Policy</div>
<div class="r" style="left:468.00px;top:606.60px;width:1.20px;height:1.40px;background:#777;"></div>
<div class="r" style="left:471.00px;top:606.60px;width:1.20px;height:1.40px;background:#777;"></div>
<div class="r" style="left:474.00px;top:606.60px;width:1.20px;height:1.40px;background:#777;"></div>
<div class="r" style="left:478.60px;top:606.60px;width:1.20px;height:1.40px;background:#777;"></div>
<div class="r" style="left:757.00px;top:418.00px;width:1.00px;height:9.00px;background:#cfcfcf;"></div>
<div class="r" style="left:757.00px;top:456.00px;width:1.00px;height:8.00px;background:#9a8a6a;"></div>
<div class="r" style="left:387.00px;top:182.00px;width:369.80px;height:424.00px;background:#6ac9ea;border:1px solid #3c5560;"></div>
<div class="t" style="left:469.70px;top:187.19px;height:19px;line-height:19px;font-size:14.6px;color:#000;transform:scaleX(0.8923);transform-origin:0 50%;">End User Default Locale Properties</div>
<div class="r" style="left:721.00px;top:183.00px;width:30.40px;height:18.90px;background:#c55a50;border:1px solid #ae4e46;border-top:none;"></div>
<div class="t" style="left:732.60px;top:181.87px;height:18px;line-height:18px;font-size:13.5px;color:#000;font-weight:700;transform:scaleX(1.15);transform-origin:left center;">x</div>
<div class="r" style="left:394.00px;top:210.00px;width:356.00px;height:389.20px;background:#f0f0f0;"></div>
<div class="r" style="left:399.40px;top:235.00px;width:344.90px;height:331.20px;background:#fff;border:1.2px solid #adadb1;"></div>
<div class="r" style="left:740.40px;top:236.00px;width:1.00px;height:329.00px;background:#f3f3f3;"></div>
<div class="r" style="left:401.00px;top:219.20px;width:83.60px;height:16.40px;background:#f0f0f0;border:1px solid #acacac;"></div>
<div class="t" style="left:406.20px;top:221.17px;height:14px;line-height:14px;font-size:11px;color:#000;transform:scaleX(0.8502);transform-origin:0 50%;">Regional Options</div>
<div class="r" style="left:483.60px;top:219.20px;width:49.80px;height:16.40px;background:#f0f0f0;border:1px solid #acacac;"></div>
<div class="t" style="left:489.20px;top:221.17px;height:14px;line-height:14px;font-size:11px;color:#000;transform:scaleX(0.8291);transform-origin:0 50%;">Numbers</div>
<div class="r" style="left:532.40px;top:219.20px;width:51.00px;height:16.40px;background:#f0f0f0;border:1px solid #acacac;"></div>
<div class="t" style="left:537.50px;top:221.17px;height:14px;line-height:14px;font-size:11px;color:#000;transform:scaleX(0.8684);transform-origin:0 50%;">Currency</div>
<div class="r" style="left:582.40px;top:219.20px;width:37.00px;height:16.40px;background:#f0f0f0;border:1px solid #acacac;"></div>
<div class="t" style="left:588.00px;top:221.17px;height:14px;line-height:14px;font-size:11px;color:#000;transform:scaleX(0.7801);transform-origin:0 50%;">Time</div>
<div class="r" style="left:658.40px;top:219.20px;width:46.60px;height:16.40px;background:#f0f0f0;border:1px solid #acacac;"></div>
<div class="t" style="left:662.50px;top:221.17px;height:14px;line-height:14px;font-size:11px;color:#000;transform:scaleX(0.8067);transform-origin:0 50%;">Common</div>
<div class="r" style="left:618.00px;top:217.00px;width:41.00px;height:19.40px;background:#fff;border:1px solid #acacac;border-bottom:none;"></div>
<div class="t" style="left:625.00px;top:219.97px;height:14px;line-height:14px;font-size:11px;color:#000;transform:scaleX(0.8607);transform-origin:0 50%;">Date</div>
<div class="r" style="left:413.00px;top:252.60px;width:317.70px;height:59.60px;border:1px solid #dfe5ea;border-radius:3px;"></div>
<div class="r" style="left:419.00px;top:249.60px;width:41.85px;height:7.00px;background:#fff;"></div>
<div class="t" style="left:420.70px;top:246.57px;height:14px;line-height:14px;font-size:11px;color:#000;transform:scaleX(0.8344);transform-origin:0 50%;">Calendar</div>
<div class="r" style="left:413.00px;top:327.00px;width:317.70px;height:101.40px;border:1px solid #dfe5ea;border-radius:3px;"></div>
<div class="r" style="left:419.00px;top:324.00px;width:49.35px;height:7.00px;background:#fff;"></div>
<div class="t" style="left:420.70px;top:320.97px;height:14px;line-height:14px;font-size:11px;color:#000;transform:scaleX(0.8816);transform-origin:0 50%;">Short date</div>
<div class="r" style="left:413.00px;top:442.00px;width:317.70px;height:80.00px;border:1px solid #dfe5ea;border-radius:3px;"></div>
<div class="r" style="left:419.00px;top:439.00px;width:46.85px;height:7.00px;background:#fff;"></div>
<div class="t" style="left:420.70px;top:435.97px;height:14px;line-height:14px;font-size:11px;color:#000;transform:scaleX(0.8634);transform-origin:0 50%;">Long date</div>
<div class="t" style="left:420.75px;top:263.57px;height:14px;line-height:14px;font-size:11px;color:#000;transform:scaleX(0.9020);transform-origin:0 50%;">When a two-digit year is entered, interpret it as a year between:</div>
<div class="r" style="left:421.00px;top:283.20px;width:53.60px;height:18.00px;background:#fff;border:1px solid #cdcdcd;"></div>
<div class="t" style="left:427.00px;top:285.57px;height:14px;line-height:14px;font-size:11px;color:#8a8a8a;transform:scaleX(0.8581);transform-origin:0 50%;">1930</div>
<div class="t" style="left:485.75px;top:285.77px;height:14px;line-height:14px;font-size:11px;color:#000;transform:scaleX(0.8173);transform-origin:0 50%;">and</div>
<div class="r" style="left:514.40px;top:283.20px;width:50.40px;height:18.00px;background:#fff;border:1px solid #4a9cf0;"></div>
<div class="r" style="left:519.40px;top:286.20px;width:21.60px;height:11.40px;background:#3399ff;"></div>
<div class="t" style="left:520.00px;top:285.37px;height:14px;line-height:14px;font-size:11px;color:#fff;transform:scaleX(0.8418);transform-origin:0 50%;">2029</div>
<svg class="r" style="left:517.00px;top:298.00px;" width="46" height="3" viewBox="0 0 46 3"><path d="M0.40 1.50H45.80" stroke="#f01414" stroke-width="1" stroke-dasharray="2.8 1.85" fill="none"/></svg>
<div class="r" style="left:565.00px;top:283.20px;width:15.60px;height:9.00px;background:#e4e4e4;border:1px solid #b4b4b4;"></div>
<div class="r" style="left:565.00px;top:292.20px;width:15.60px;height:9.00px;background:#e4e4e4;border:1px solid #b4b4b4;"></div>
<svg class="r" style="left:569.60px;top:285.80px;" width="6.4" height="4" viewBox="0 0 6.4 4"><path d="M.6 3.4L3.2 .8l2.6 2.6" fill="none" stroke="#333" stroke-width="1.1"/></svg>
<svg class="r" style="left:569.60px;top:294.80px;" width="6.4" height="4" viewBox="0 0 6.4 4"><path d="M.6 .6L3.2 3.2 5.8 .6" fill="none" stroke="#333" stroke-width="1.1"/></svg>
<div class="t" style="left:420.75px;top:339.37px;height:14px;line-height:14px;font-size:11px;color:#000;transform:scaleX(0.8664);transform-origin:0 50%;">Short date sample:</div>
<div class="r" style="left:514.80px;top:339.20px;width:208.40px;height:18.40px;background:#fff;border:1px solid #7f7f7f;"></div>
<div class="t" style="left:520.40px;top:341.97px;height:14px;line-height:14px;font-size:11px;color:#000;transform:scaleX(0.8838);transform-origin:0 50%;">2/18/2016</div>
<div class="t" style="left:420.75px;top:381.77px;height:14px;line-height:14px;font-size:11px;color:#000;transform:scaleX(0.9001);transform-origin:0 50%;">Short date format:</div>
<div class="r" style="left:514.80px;top:378.80px;width:208.40px;height:18.60px;background:#fff;border:1px solid #7f7f7f;border-bottom:none;"></div>
<svg class="r" style="left:514.00px;top:396.00px;" width="210" height="3" viewBox="0 0 210 3"><path d="M0.80 1.50H209.20" stroke="#f01414" stroke-width="1" stroke-dasharray="2.8 1.85" fill="none"/></svg>
<div class="t" style="left:519.80px;top:381.27px;height:14px;line-height:14px;font-size:11px;color:#000;transform:scaleX(0.9506);transform-origin:0 50%;">M/d/yyyy</div>
<svg class="r" style="left:712.60px;top:385.70px;" width="7.4" height="5" viewBox="0 0 7.4 5"><path d="M.6 .6L3.7 3.9 6.8 .6" fill="none" stroke="#3c3c3c" stroke-width="1.7"/></svg>
<div class="t" style="left:420.75px;top:403.77px;height:14px;line-height:14px;font-size:11px;color:#000;transform:scaleX(0.8903);transform-origin:0 50%;">Date separator:</div>
<div class="r" style="left:514.80px;top:401.80px;width:65.80px;height:18.60px;background:#fff;border:1px solid #7f7f7f;border-bottom:none;"></div>
<svg class="r" style="left:514.00px;top:419.00px;" width="67" height="3" viewBox="0 0 67 3"><path d="M0.80 1.50H66.60" stroke="#f01414" stroke-width="1" stroke-dasharray="2.8 1.85" fill="none"/></svg>
<div class="t" style="left:520.40px;top:404.27px;height:14px;line-height:14px;font-size:11px;color:#000;">/</div>
<svg class="r" style="left:570.00px;top:408.70px;" width="7.4" height="5" viewBox="0 0 7.4 5"><path d="M.6 .6L3.7 3.9 6.8 .6" fill="none" stroke="#3c3c3c" stroke-width="1.7"/></svg>
<div class="t" style="left:420.75px;top:454.37px;height:14px;line-height:14px;font-size:11px;color:#000;transform:scaleX(0.8618);transform-origin:0 50%;">Long date sample:</div>
<div class="r" style="left:514.80px;top:454.20px;width:208.40px;height:18.00px;background:#fff;border:1px solid #7f7f7f;"></div>
<div class="t" style="left:520.40px;top:456.77px;height:14px;line-height:14px;font-size:11px;color:#000;transform:scaleX(0.8951);transform-origin:0 50%;">Thursday, February 18, 2016</div>
<div class="t" style="left:420.75px;top:497.77px;height:14px;line-height:14px;font-size:11px;color:#000;transform:scaleX(0.8901);transform-origin:0 50%;">Long date format:</div>
<div class="r" style="left:514.80px;top:494.80px;width:208.40px;height:18.60px;background:#fff;border:1px solid #7f7f7f;border-bottom:none;"></div>
<svg class="r" style="left:514.00px;top:512.00px;" width="210" height="3" viewBox="0 0 210 3"><path d="M0.80 1.50H209.20" stroke="#f01414" stroke-width="1" stroke-dasharray="2.8 1.85" fill="none"/></svg>
<div class="t" style="left:519.80px;top:497.27px;height:14px;line-height:14px;font-size:11px;color:#000;transform:scaleX(0.8778);transform-origin:0 50%;">dddd, MMMM d, yyyy</div>
<svg class="r" style="left:712.60px;top:501.70px;" width="7.4" height="5" viewBox="0 0 7.4 5"><path d="M.6 .6L3.7 3.9 6.8 .6" fill="none" stroke="#3c3c3c" stroke-width="1.7"/></svg>
<div class="r" style="left:413.00px;top:550.80px;width:316.00px;height:1.00px;background:#f6f6f6;"></div>
<div class="r" style="left:460.80px;top:572.80px;width:65.40px;height:18.80px;background:#e3e3e3;border:1.2px solid #3f86c4;"></div>
<div class="t" style="left:486.25px;top:575.77px;height:14px;line-height:14px;font-size:11px;color:#000;transform:scaleX(0.8180);transform-origin:0 50%;">OK</div>
<div class="r" style="left:533.00px;top:572.80px;width:65.80px;height:18.80px;background:#e1e1e1;border:1px solid #a8a8a8;"></div>
<div class="t" style="left:551.00px;top:575.77px;height:14px;line-height:14px;font-size:11px;color:#000;transform:scaleX(0.8323);transform-origin:0 50%;">Cancel</div>
<div class="r" style="left:606.00px;top:572.80px;width:64.60px;height:18.80px;background:#f4f4f4;border:1px solid #cfcfcf;"></div>
<div class="t" style="left:626.00px;top:575.77px;height:14px;line-height:14px;font-size:11px;color:#8a8a8a;transform:scaleX(0.8631);transform-origin:0 50%;">Apply</div>
<div class="r" style="left:678.00px;top:572.80px;width:65.20px;height:18.80px;background:#e1e1e1;border:1px solid #a8a8a8;"></div>
<div class="t" style="left:700.50px;top:575.77px;height:14px;line-height:14px;font-size:11px;color:#000;transform:scaleX(0.8288);transform-origin:0 50%;">Help</div>
</body></html>
